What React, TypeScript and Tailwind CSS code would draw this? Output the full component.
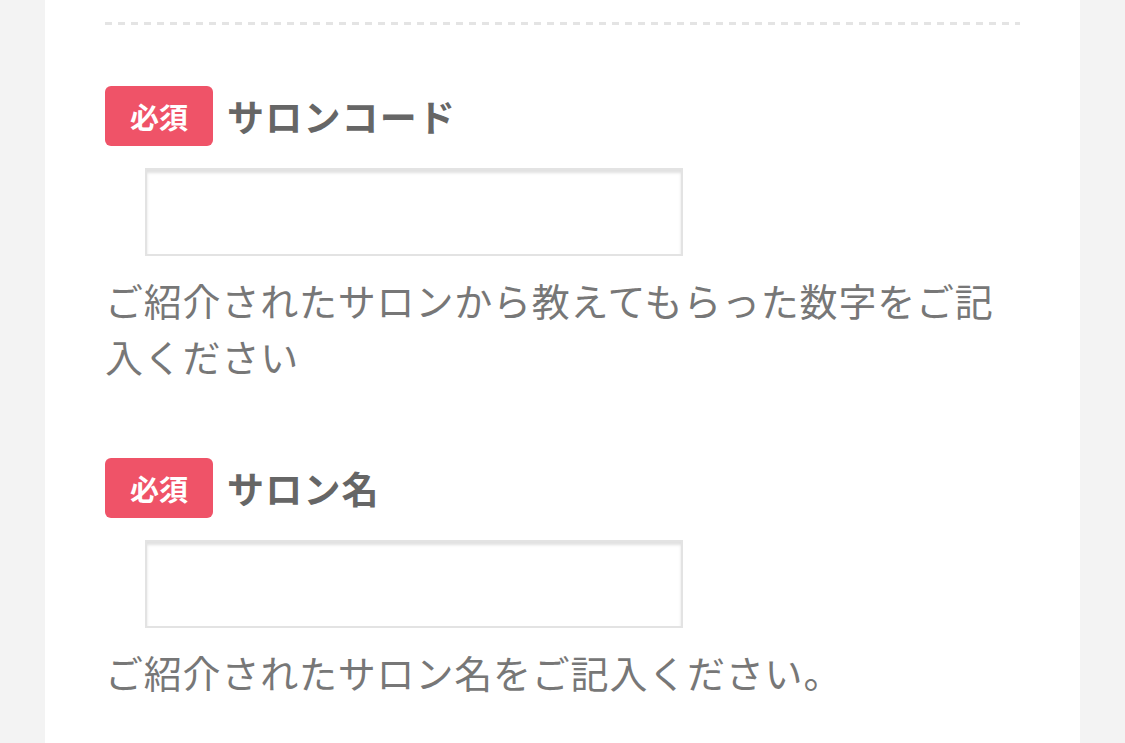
import React from "react";

const font = { fontFamily: '"Noto Sans CJK JP", "Noto Sans", sans-serif' };

function Field({ label, help }: { label: string; help: string }) {
  return (
    <div className="flex flex-col">
      <div className="flex items-center h-[60px]">
        <span className="flex items-center justify-center w-[108px] h-[60px] rounded-[6px] bg-[#ef5368] text-white text-[29px] font-bold leading-none">
          必須
        </span>
        <span className="ml-[14px] text-[37px] tracking-[1.2px] font-bold text-[#666666] leading-none">{label}</span>
      </div>
      <div className="pl-[40px] mt-[22px]">
        <div className="w-[538px] h-[88px] bg-white border-2 border-[#e3e3e3] shadow-[inset_0_3px_3px_rgba(0,0,0,0.12)]" />
      </div>
      <p className="mt-[16px] max-w-[905px] text-[38px] tracking-[0.8px] leading-[56px] text-[#777777]">{help}</p>
    </div>
  );
}

export default function App() {
  return (
    <div className="w-[1125px] h-[743px] bg-[#f3f3f3] overflow-hidden" style={font}>
      <div className="ml-[45px] w-[1035px] h-full bg-white px-[60px] pt-[22px]">
        <div className="h-[3px] bg-[repeating-linear-gradient(90deg,#e4e4e4_0_7px,transparent_7px_13px)]" />
        <div className="mt-[61px]">
          <Field label="サロンコード" help="ご紹介されたサロンから教えてもらった数字をご記入ください" />
        </div>
        <div className="mt-[74px]">
          <Field label="サロン名" help="ご紹介されたサロン名をご記入ください。" />
        </div>
      </div>
    </div>
  );
}
